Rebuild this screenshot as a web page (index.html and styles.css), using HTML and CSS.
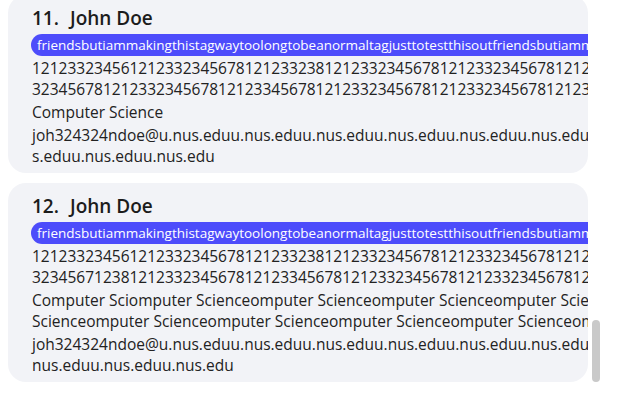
FILE: index.html
```html
<!DOCTYPE html>
<html lang="en">
<head>
<meta charset="utf-8">
<title>Contacts</title>
<link rel="stylesheet" href="styles.css">
</head>
<body>
<div class="list">
  <article class="card">
    <h2 class="name"><span>11.</span><span>John Doe</span></h2>
    <div class="tags"><span class="tag">friendsbutiammakingthistagwaytoolongtobeanormaltagjusttotestthisoutfriendsbutiammakingthistagwaytoolong</span></div>
    <div class="field">
      <div class="line">121233234561212332345678121233238121233234567812123323456781212332345678</div>
      <div class="line">323456781212332345678121233456781212332345678121233234567812123323456781</div>
    </div>
    <div class="field">
      <div class="line">Computer Science</div>
    </div>
    <div class="field">
      <div class="line">joh324324ndoe@u.nus.eduu.nus.eduu.nus.eduu.nus.eduu.nus.eduu.nus.eduu.nus.eduu.nu</div>
      <div class="line">s.eduu.nus.eduu.nus.edu</div>
    </div>
  </article>
  <article class="card">
    <h2 class="name"><span>12.</span><span>John Doe</span></h2>
    <div class="tags"><span class="tag">friendsbutiammakingthistagwaytoolongtobeanormaltagjusttotestthisoutfriendsbutiammakingthistagwaytoolong</span></div>
    <div class="field">
      <div class="line">121233234561212332345678121233238121233234567812123323456781212332345678</div>
      <div class="line">323456712381212332345678121233456781212332345678121233234567812123323456</div>
    </div>
    <div class="field">
      <div class="line">Computer Sciomputer Scienceomputer Scienceomputer Scienceomputer Scienceomputer</div>
      <div class="line">Scienceomputer Scienceomputer Scienceomputer Scienceomputer Scienceomputer</div>
    </div>
    <div class="field">
      <div class="line">joh324324ndoe@u.nus.eduu.nus.eduu.nus.eduu.nus.eduu.nus.eduu.nus.eduu.nus.eduu.nus.</div>
      <div class="line">nus.eduu.nus.eduu.nus.edu</div>
    </div>
  </article>
</div>
<div class="scroll-thumb"></div>
</body>
</html>
```
FILE: styles.css
```css
html, body {
  margin: 0;
  padding: 0;
  background: #ffffff;
  overflow: hidden;
}

body {
  width: 625px;
  height: 403px;
  position: relative;
  font-family: "Open Sans", "Noto Sans", sans-serif;
  color: #222222;
}

.list {
  display: flex;
  flex-direction: column;
  gap: 10px;
  width: 580px;
  margin-top: -5px;
  padding-left: 8px;
}

.card {
  background: #f2f3f7;
  border-radius: 18px;
  padding: 10px 0 6px 24px;
  overflow: hidden;
  display: flex;
  flex-direction: column;
  gap: 2px;
}

.name {
  margin: 0;
  display: flex;
  gap: 11px;
  font-size: 19px;
  font-weight: 600;
  line-height: 26px;
  color: #1c1c1c;
}

.tags {
  display: flex;
  margin-top: 1px;
  margin-left: -1px;
}

.tag {
  background: #4d4cfb;
  color: #ffffff;
  font-size: 13.5px;
  font-weight: 500;
  line-height: 22px;
  height: 22px;
  padding: 0 6px;
  border-radius: 11px;
  white-space: nowrap;
}

.field {
  display: flex;
  flex-direction: column;
  font-size: 15.5px;
  line-height: 21px;
}

.line {
  white-space: nowrap;
}

.scroll-thumb {
  position: absolute;
  left: 592px;
  top: 320px;
  width: 8px;
  height: 62px;
  border-radius: 4px;
  background: #c9c9c9;
}
```
